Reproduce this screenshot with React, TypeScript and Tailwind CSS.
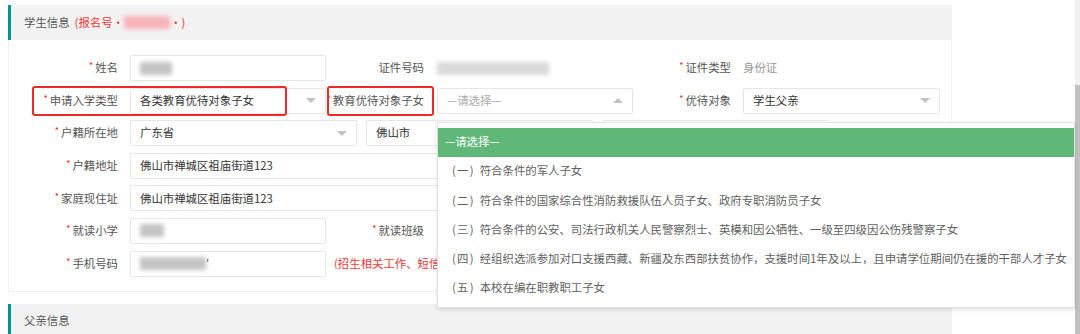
const options = [
  ["(一)", "符合条件的军人子女"],
  ["(二)", "符合条件的国家综合性消防救援队伍人员子女、政府专职消防员子女"],
  ["(三)", "符合条件的公安、司法行政机关人民警察烈士、英模和因公牺牲、一级至四级因公伤残警察子女"],
  ["(四)", "经组织选派参加对口支援西藏、新疆及东西部扶贫协作，支援时间1年及以上，且申请学位期间仍在援的干部人才子女"],
  ["(五)", "本校在编在职教职工子女"],
]

function Label({ text, req = true, w }: { text: string; req?: boolean; w: string }) {
  return (
    <div className={`${w} shrink-0 text-right text-[#555] whitespace-nowrap`}>
      {req && <span className="relative top-[-3px] mr-[2px] text-[9px] text-[#f22]">*</span>}
      {text}
    </div>
  )
}

function Arrow({ up = false }: { up?: boolean }) {
  return up ? (
    <span className="ml-auto w-0 h-0 border-x-[5px] border-x-transparent border-b-[5px] border-b-[#c2c2c2]" />
  ) : (
    <span className="ml-auto w-0 h-0 border-x-[5px] border-x-transparent border-t-[5px] border-t-[#c2c2c2]" />
  )
}

function Box({ w, children, className = "" }: { w: string; children?: React.ReactNode; className?: string }) {
  return (
    <div
      className={`${w} ${className} shrink-0 h-[26px] flex items-center px-[9px] bg-white border border-[#e6e6e6] rounded-[2px] text-[#333] whitespace-nowrap overflow-hidden`}
    >
      {children}
    </div>
  )
}

function Blur({ w, c = "bg-[#c4c4c4]" }: { w: string; c?: string }) {
  return <span className={`inline-block ${w} h-[13px] ${c} blur-[2px]`} />
}

function Header({ children }: { children: React.ReactNode }) {
  return (
    <div className="h-[35px] flex items-center bg-[#f2f2f2] border-l-[3px] border-[#009688] pl-[13px] text-[#555]">
      {children}
    </div>
  )
}

export default function App() {
  return (
    <div className="w-[1080px] h-[334px] overflow-hidden bg-white flex font-['Noto_Sans_CJK_SC','Noto_Sans',sans-serif] text-[11.4px] leading-none">
      <div className="relative flex-1 pl-[8px] pt-[5px]">
        <div className="w-[944px]">
          <Header>
            学生信息
            <span className="ml-[5px] text-[#f33] flex items-center">
              (报名号·
              <Blur w="w-[46px]" c="bg-[#f6b3bb]" />
              ·)
            </span>
          </Header>

          <div className="border border-t-0 border-[#f0f0f0] pt-[15px] pb-[14px] flex flex-col gap-[6.6px]">
            {/* row 1 */}
            <div className="flex items-center">
              <Label text="姓名" w="w-[109px]" />
              <Box w="w-[196px] ml-[12px]">
                <Blur w="w-[32px]" />
              </Box>
              <Label text="证件号码" req={false} w="w-[98px]" />
              <div className="w-[196px] ml-[13px] h-[26px] flex items-center">
                <Blur w="w-[112px]" c="bg-[#dadada]" />
              </div>
              <Label text="证件类型" w="w-[98px]" />
              <div className="ml-[12px] text-[#999]">身份证</div>
            </div>

            {/* row 2 */}
            <div className="relative flex items-center">
              <Label text="申请入学类型" w="w-[109px]" />
              <Box w="w-[196px] ml-[12px]">
                各类教育优待对象子女
                <Arrow />
              </Box>
              <Label text="教育优待对象子女" w="w-[98px]" />
              <div className="relative ml-[13px]">
                <Box w="w-[196px]">
                  <span className="text-[#aaa]">—请选择—</span>
                  <Arrow up />
                </Box>
                <div className="absolute left-0 top-[34px] z-10 w-[638px] bg-white border border-[#e2e2e2] shadow-[0_2px_4px_rgba(0,0,0,0.12)] pt-[5px] pb-[4px] text-[#5f5f5f]">
                  <div className="h-[29px] flex items-center pl-[7px] bg-[#5fb878] text-white">—请选择—</div>
                  {options.map(([n, t]) => (
                    <div key={n} className="h-[29.2px] flex items-center pl-[14px] whitespace-nowrap">
                      <span className="tracking-[1.2px] mr-[5px]">{n}</span>
                      {t}
                    </div>
                  ))}
                </div>
              </div>
              <Label text="优待对象" w="w-[98px]" />
              <Box w="w-[197px] ml-[12px]">
                学生父亲
                <Arrow />
              </Box>
              <div className="absolute left-[23px] top-[-2px] w-[255px] h-[30px] border-2 border-[#ee2a24] rounded-[3px]" />
              <div className="absolute left-[318px] top-[-2px] w-[107px] h-[30px] border-2 border-[#ee2a24] rounded-[3px]" />
            </div>

            {/* row 3 */}
            <div className="flex items-center">
              <Label text="户籍所在地" w="w-[109px]" />
              <Box w="w-[227px] ml-[12px]">
                广东省
                <Arrow />
              </Box>
              <Box w="w-[227px] ml-[9px]">
                佛山市
                <Arrow />
              </Box>
              <Box w="w-[227px] ml-[9px]">
                禅城区
                <Arrow />
              </Box>
            </div>

            {/* row 4 */}
            <div className="flex items-center">
              <Label text="户籍地址" w="w-[109px]" />
              <Box w="w-[810px] ml-[12px]">佛山市禅城区祖庙街道123</Box>
            </div>

            {/* row 5 */}
            <div className="flex items-center">
              <Label text="家庭现住址" w="w-[109px]" />
              <Box w="w-[810px] ml-[12px]">佛山市禅城区祖庙街道123</Box>
            </div>

            {/* row 6 */}
            <div className="flex items-center">
              <Label text="就读小学" w="w-[109px]" />
              <Box w="w-[196px] ml-[12px]">
                <Blur w="w-[24px]" />
              </Box>
              <Label text="就读班级" w="w-[98px]" />
              <Box w="w-[196px] ml-[13px]" />
            </div>

            {/* row 7 */}
            <div className="flex items-center">
              <Label text="手机号码" w="w-[109px]" />
              <Box w="w-[196px] ml-[12px]">
                <Blur w="w-[66px]" />
                <span className="text-[#555]">'</span>
              </Box>
              <div className="ml-[8px] w-[103px] overflow-hidden text-[#f33] whitespace-nowrap">(招生相关工作、短信通知将发送至此号码)</div>
            </div>
          </div>

          <div className="mt-[12px]">
            <Header>父亲信息</Header>
          </div>
        </div>
      </div>
      <div className="w-[5px] bg-[#f1f1f1] flex flex-col">
        <div className="mt-[85px] flex-1 bg-[#c1c1c1]" />
      </div>
    </div>
  )
}
